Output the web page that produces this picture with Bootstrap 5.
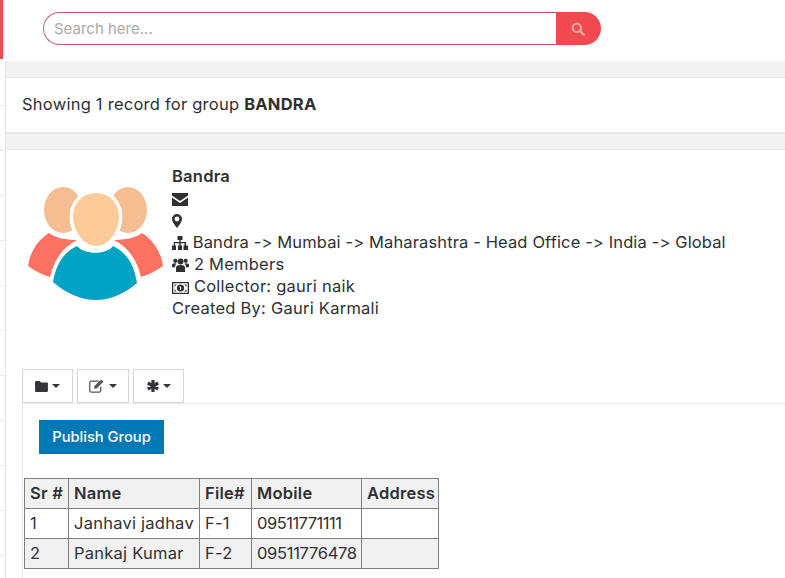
<!DOCTYPE html>
<html lang="en"><head><meta charset="utf-8">
<link href="https://cdn.jsdelivr.net/npm/bootstrap@5.3.0/dist/css/bootstrap.min.css" rel="stylesheet">
<style>
html,body{height:578px;overflow:hidden;background:#fff}
body{font-family:Inter,"Liberation Sans",sans-serif;font-size:16.5px;letter-spacing:.24px;font-variant-ligatures:none;font-feature-settings:"calt" 0,"liga" 0;color:#2f3033;line-height:22px}
.shell{height:578px;overflow:hidden}
.rail{width:6px;flex:none;background-image:repeating-linear-gradient(to bottom,#fff 0,#fff 44px,#e9e9ec 44px,#e9e9ec 45px);background-position:0 61px;border-right:1px solid #e6e6ea;position:relative}
.rail-mark{height:59px;width:3px;background:#f1494f;box-shadow:0 2px 0 #fff,3px 0 0 #fff,3px 2px 0 #fff}
.main{width:779px;flex:none}
.topbar{height:61px;padding:12px 0 0 37px}
.searchbox{width:558px;height:33px}
.searchbox input{flex:1;min-width:0;border:1px solid #c9586c;border-right:0;border-radius:17px 0 0 17px;padding:0 10px;font-size:15px;letter-spacing:0;outline:0;font-family:inherit;color:#333}
.searchbox input::placeholder{color:#aaa}
.searchbox button{width:45px;border:0;background:#f1494f;border-radius:0 17px 17px 0;padding:0 2px 2px 0}
.gapband{background:#f1f2f4}
.gb1{height:17px;border-bottom:1px solid #ebebef}
.gb2{height:18px;border-top:2px solid #e9e9ec;border-bottom:1px solid #ebebef}
.headline{height:54px;padding:15px 0 0 16px}
.profile{padding:15px 0 0 16px;height:219px}
.avatar{width:150px;flex:none;padding-top:15px}
.avatar svg{display:block}
.info{line-height:22px;white-space:nowrap}
.info svg{vertical-align:-2px}
.info b{font-weight:600}
.pathline{letter-spacing:.13px}
.tabbar{padding-left:16px;height:34px;gap:4px}
.tabbtn{width:51px;height:34px;border:1px solid #d6d6d6;background:#fff;display:flex;align-items:center;justify-content:center;gap:4px;padding:0;border-radius:0}
.tabwide{width:52px}
.caretmark{width:0;height:0;border-left:4px solid transparent;border-right:4px solid transparent;border-top:4px solid #33353a}
.panel{margin-left:16px;border-left:1px solid #ececec;border-top:1px solid #ececec;height:200px;padding:16px 0 0 16px}
.pub{background:#0079b5;color:#fff;border:0;border-radius:0;width:125px;height:34px;font-size:14.7px;letter-spacing:0;font-weight:500;padding:0}
.pub:hover{background:#0079b5;color:#fff}
.grouptable{border-collapse:collapse;margin:24px 0 0 -15px;table-layout:fixed;width:414px}
.grouptable th,.grouptable td{border:1px solid #7f7f7f;padding:0 5px 2px;height:30px;white-space:nowrap}
.grouptable th{font-weight:600;background:#f1f1f1}
.grouptable tr.alt td{background:#f1f1f1}
.grouptable td.numa{letter-spacing:-.5px}
.grouptable td.numb{letter-spacing:-.3px}
</style></head>
<body>
<div class="shell d-flex">
<div class="rail"><div class="rail-mark"></div></div>
<div class="main">
<div class="topbar">
<form class="searchbox d-flex" onsubmit="return false">
<input type="text" placeholder="Search here...">
<button type="button" aria-label="Search"><svg width="14" height="14" viewBox="0 0 14 14"><circle cx="5.800" cy="5.800" r="4.200" fill="none" stroke="#d9a79a" stroke-width="2.200"/><path d="M9 9l3.600 3.600" stroke="#d9a79a" stroke-width="2.600" stroke-linecap="round"/></svg></button>
</form>
</div>
<div class="gapband gb1"></div>
<div class="headline">Showing 1 record for group <b class="fw-bold">BANDRA</b></div>
<div class="gapband gb2"></div>
<div class="profile d-flex">
<div class="avatar">
<svg width="150" height="124" viewBox="0 0 150 124">
<ellipse cx="41" cy="30" rx="19" ry="23" fill="#f4bd92"/>
<ellipse cx="106" cy="30" rx="19" ry="23" fill="#f4bd92"/>
<path d="M27 53C34 58 44 60 55 60C40 68 32 80 28 97C20 95 12 90 6 86C8 72 16 60 27 53Z" fill="#fd7163"/>
<path d="M120 53C113 58 103 60 92 60C107 68 115 80 119 97C127 95 135 90 141 86C139 72 131 60 120 53Z" fill="#fd7163"/>
<path d="M74 13C89 13 97 25 97 37C97 50 87 66 74 66C61 66 51 50 51 37C51 25 59 13 74 13Z" fill="#fdcb99" stroke="#fff" stroke-width="7" paint-order="stroke"/>
<path d="M55 66C62 75 85 75 91 66C104 72 112 84 115 103C100 116 85 120 74 120C60 120 45 114 31 102C34 84 42 72 55 66Z" fill="#00a3c4" stroke="#fff" stroke-width="5" paint-order="stroke"/>
</svg>
</div>
<div class="info">
<div><b>Bandra</b></div>
<div><svg width="16" height="13" viewBox="0 0 16 13"><path d="M0 0h16v2.500L8 8 0 2.500z" fill="#2f3033"/><path d="M0 4.500 8 10l8-5.500V13H0z" fill="#2f3033"/></svg></div>
<div><svg width="10" height="14" viewBox="0 0 10 14"><path fill-rule="evenodd" d="M5 0a5 5 0 0 1 5 5c0 3-5 9-5 9S0 8 0 5a5 5 0 0 1 5-5zm0 2.600a2.400 2.400 0 1 0 0 4.800 2.400 2.400 0 0 0 0-4.800z" fill="#2f3033"/></svg></div>
<div class="pathline"><svg width="16" height="14" viewBox="0 0 16 14"><path d="M5.500 0h5v4H8.700v2h5.300v3.500h2V14h-4.500V9.500h1V7.300H8.700v2.200h1.300V14H6V9.500h1.300V7.300H3v2.200h1V14H0V9.500h1.800V6h5.500V4H5.500z" fill="#2f3033"/></svg> Bandra -&gt; Mumbai -&gt; Maharashtra - Head Office -&gt; India -&gt; Global</div>
<div><svg width="17" height="14" viewBox="0 0 17 14"><circle cx="8.500" cy="3.600" r="3" fill="#2f3033"/><circle cx="3.300" cy="2.800" r="2.100" fill="#2f3033"/><circle cx="13.700" cy="2.800" r="2.100" fill="#2f3033"/><path d="M4 14V9.500C4 7.800 6 7 8.500 7s4.500.8 4.500 2.500V14z" fill="#2f3033"/><path d="M0 9V7c0-1 1.200-1.700 3-1.700.6 0 1 .2 1.500.4A4 4 0 0 0 3 8.500V9.500zM17 9V7c0-1-1.200-1.700-3-1.700-.6 0-1 .2-1.500.4A4 4 0 0 1 14 8.500V9.500z" fill="#2f3033"/></svg> 2 Members</div>
<div><svg width="17" height="12" viewBox="0 0 17 12"><path fill-rule="evenodd" d="M0 0h17v12H0zM1.300 1.300v9.400h14.400V1.300z" fill="#2f3033"/><path d="M2.500 2.500h2.200L2.500 4.700zM14.500 2.500v2.200L12.300 2.500zM2.500 9.500V7.300L4.700 9.500zM14.500 9.500h-2.200L14.500 7.300z" fill="#2f3033"/><circle cx="8.500" cy="6" r="3.600" fill="#2f3033"/><path d="M7.600 4.400h1.500v3.300h-1.100V5.400l-.6.200z" fill="#fff"/></svg> Collector: gauri naik</div>
<div>Created By: Gauri Karmali</div>
</div>
</div>
<div class="tabbar d-flex">
<button type="button" class="tabbtn" aria-label="Files"><svg width="13" height="11" viewBox="0 0 14 12"><path d="M1 0h4l1.500 1.500H13a1 1 0 0 1 1 1V11a1 1 0 0 1-1 1H1a1 1 0 0 1-1-1V1a1 1 0 0 1 1-1z" fill="#33353a"/></svg><span class="caretmark"></span></button>
<button type="button" class="tabbtn tabwide" aria-label="Edit"><svg width="16" height="14" viewBox="0 0 15 13"><path d="M11 7.500V11a1.300 1.300 0 0 1-1.300 1.300H2A1.300 1.300 0 0 1 .7 11V3.300A1.300 1.300 0 0 1 2 2h7" fill="none" stroke="#55575c" stroke-width="1.200"/><path d="M5 6.500 11.500.5l2 2L7.200 8.800 4.800 9z" fill="#55575c"/></svg><span class="caretmark"></span></button>
<button type="button" class="tabbtn" aria-label="More"><svg width="12" height="12" viewBox="0 0 12 12"><path d="M6 6V0M6 6l5.200-3M6 6l5.200 3M6 6v6M6 6 .8 9M6 6 .8 3" stroke="#33353a" stroke-width="3.200"/></svg><span class="caretmark"></span></button>
</div>
<div class="panel">
<button type="button" class="btn pub">Publish Group</button>
<table class="grouptable">
<tr><th style="width:44px">Sr #</th><th style="width:131px">Name</th><th style="width:52px">File#</th><th style="width:110px">Mobile</th><th style="width:77px">Address</th></tr>
<tr><td>1</td><td>Janhavi jadhav</td><td>F-1</td><td class="numa">09511771111</td><td></td></tr>
<tr class="alt"><td>2</td><td>Pankaj Kumar</td><td>F-2</td><td class="numb">09511776478</td><td></td></tr>
</table>
</div>
</div>
</div>
<script src="https://cdn.jsdelivr.net/npm/bootstrap@5.3.0/dist/js/bootstrap.bundle.min.js"></script>
</body></html>
